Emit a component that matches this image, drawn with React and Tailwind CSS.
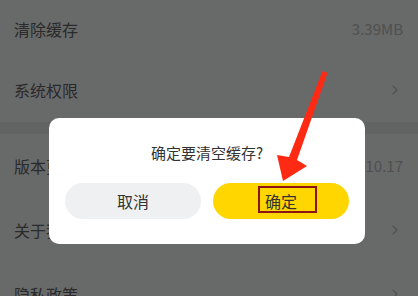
import { ChevronRight } from "lucide-react";

const rows = [
  { label: "清除缓存", value: "3.39MB", h: "h-[58px]" },
  { label: "系统权限", chevron: true, h: "h-[64px]" },
];
const rows2 = [
  { label: "版本更新", value: "V3.10.17" },
  { label: "关于我们", chevron: true },
  { label: "隐私政策", chevron: true },
];

const Row = ({ label, value, chevron, h = "h-[64px]" }) => (
  <div className={`${h} flex items-center justify-between pl-[14px] pr-[15px] bg-[#686969]`}>
    <span className="text-[16px] text-[#2a2a2a]">{label}</span>
    {value && <span className="text-[15px] text-[#4f5050]">{value}</span>}
    {chevron && <ChevronRight size={16} strokeWidth={1.6} className="text-[#505151]" />}
  </div>
);

export default function App() {
  return (
    <div
      className="relative w-[418px] h-[296px] overflow-hidden bg-[#626363]"
      style={{ fontFamily: '"Noto Sans CJK SC", "Noto Sans", sans-serif' }}
    >
      {/* settings list under the dim overlay */}
      <div className="flex flex-col">
        {rows.map((r) => (
          <Row key={r.label} {...r} />
        ))}
        <div className="h-[12px] bg-[#626363]" />
        {rows2.map((r) => (
          <Row key={r.label} {...r} />
        ))}
      </div>

      {/* dialog */}
      <div className="absolute left-[49px] top-[118px] w-[316px] h-[126px] bg-white rounded-[10px] flex flex-col items-center pt-[24px]">
        <p className="text-[15px] leading-[22px] text-[#333]">确定要清空缓存?</p>
        <div className="flex gap-[12px] mt-[19px]">
          <button className="w-[136px] h-[36px] rounded-full bg-[#eef0f1] text-[16px] text-[#333]">取消</button>
          <button className="relative w-[136px] h-[36px] rounded-full bg-[#ffd600] text-[16px] text-[#333]">
            确定
            <span className="absolute left-[45px] top-[3px] w-[59px] h-[27px] border-2 border-[#8a1414]" />
          </button>
        </div>
      </div>

      {/* red annotation arrow */}
      <svg className="absolute inset-0" width="418" height="296" viewBox="0 0 418 296">
        <polygon
          points="322.5,71 327.5,73 297,160 307,166 283,181 277,155 289,157"
          fill="#ff2a14"
        />
      </svg>
    </div>
  );
}
